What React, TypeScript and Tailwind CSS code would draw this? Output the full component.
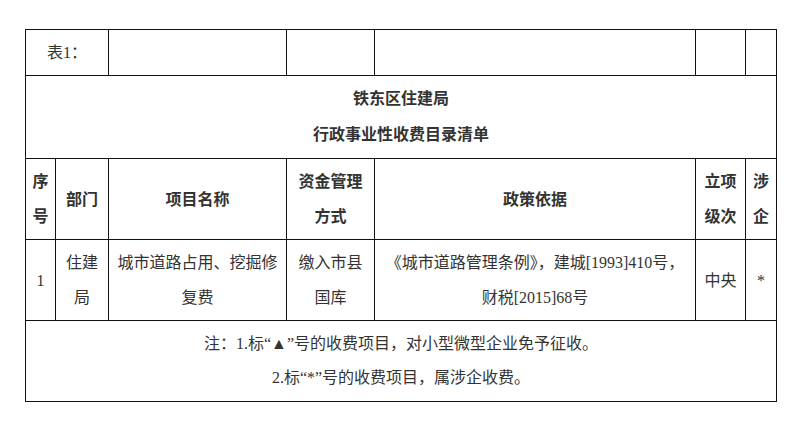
export default function App() {
  const cell = "border border-[#111] text-center align-middle px-[6px]"

  return (
    <div
      className="min-h-[446px] bg-white pl-[25px] pt-[29px] text-[16px] leading-[35px] text-[#333]"
      style={{ fontFamily: '"Liberation Serif", "Noto Sans CJK SC", serif' }}
    >
      <table className="w-[751px] table-fixed border-collapse">
        <colgroup>
          <col className="w-[30px]" />
          <col className="w-[53px]" />
          <col className="w-[178px]" />
          <col className="w-[88px]" />
          <col className="w-[321px]" />
          <col className="w-[50px]" />
          <col className="w-[31px]" />
        </colgroup>
        <tbody>
          <tr className="h-[46px]">
            <td colSpan={2} className={cell}>表1：</td>
            <td className={cell}></td>
            <td className={cell}></td>
            <td className={cell}></td>
            <td className={cell}></td>
            <td className={cell}></td>
          </tr>
          <tr className="h-[83px]">
            <td colSpan={7} className={`${cell} font-bold leading-[36px]`}>
              <div>铁东区住建局</div>
              <div>行政事业性收费目录清单</div>
            </td>
          </tr>
          <tr className="h-[81px] font-bold">
            <td className={`${cell} px-0`}>序号</td>
            <td className={cell}>部门</td>
            <td className={cell}>项目名称</td>
            <td className={cell}>资金管理方式</td>
            <td className={cell}>政策依据</td>
            <td className={`${cell} px-[1px]`}>立项级次</td>
            <td className={`${cell} px-0`}>涉企</td>
          </tr>
          <tr className="h-[81px]">
            <td className={`${cell} px-0`}>1</td>
            <td className={cell}>住建局</td>
            <td className={cell}>城市道路占用、挖掘修复费</td>
            <td className={cell}>缴入市县国库</td>
            <td className={cell}>《城市道路管理条例》，建城[1993]410号，财税[2015]68号</td>
            <td className={`${cell} px-[1px]`}>中央</td>
            <td className={`${cell} px-0`}>*</td>
          </tr>
          <tr className="h-[81px]">
            <td colSpan={7} className={`${cell} leading-[34px]`}>
              <div>注：1.标“▲”号的收费项目，对小型微型企业免予征收。</div>
              <div>2.标“*”号的收费项目，属涉企收费。</div>
            </td>
          </tr>
        </tbody>
      </table>
    </div>
  )
}
